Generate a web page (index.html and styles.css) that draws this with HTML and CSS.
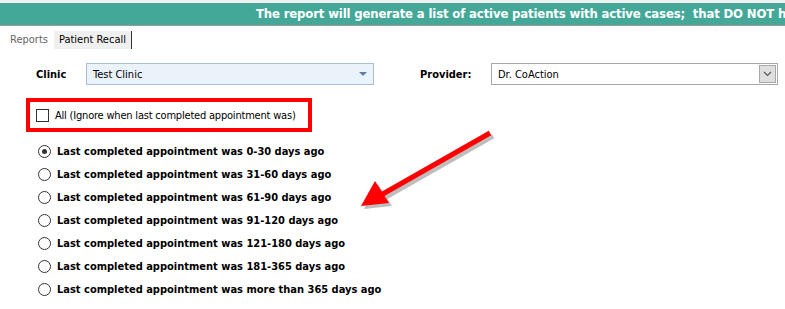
FILE: index.html
```html
<!DOCTYPE html>
<html lang="en">

<head>
    <meta charset="utf-8">
    <title>Patient Recall</title>
    <link rel="stylesheet" href="styles.css">
</head>

<body>
    <div class="banner">
        The report will generate a list of active patients with active cases;&nbsp; that DO NOT have a future appointment scheduled
    </div>
    <div class="tabs">
        <span class="tab">Reports</span>
        <span class="tab active">Patient Recall</span>
    </div>
    <div class="panel">
        <div class="filters">
            <label class="field-label clinic-label">Clinic</label>
            <div class="select clinic-select">
                <span>Test Clinic</span>
                <span class="tri"></span>
            </div>
            <label class="field-label provider-label">Provider:</label>
            <div class="select provider-select">
                <span>Dr. CoAction</span>
                <span class="drop-btn">
                    <svg width="9" height="6" viewBox="0 0 9 6"><path d="M1 1 L4.5 4.5 L8 1" fill="none" stroke="#555" stroke-width="1.2"/></svg>
                </span>
            </div>
        </div>
        <div class="all-box">
            <span class="check"></span>
            <span class="all-text">All (Ignore when last completed appointment was)</span>
        </div>
        <ul class="radios">
            <li><span class="radio on"></span>Last completed appointment was 0-30 days ago</li>
            <li><span class="radio"></span>Last completed appointment was 31-60 days ago</li>
            <li><span class="radio"></span>Last completed appointment was 61-90 days ago</li>
            <li><span class="radio"></span>Last completed appointment was 91-120 days ago</li>
            <li><span class="radio"></span>Last completed appointment was 121-180 days ago</li>
            <li><span class="radio"></span>Last completed appointment was 181-365 days ago</li>
            <li><span class="radio"></span>Last completed appointment was more than 365 days ago</li>
        </ul>
    </div>
    <!-- annotation arrow -->
    <svg class="arrow" width="140" height="85" viewBox="0 0 140 85">
        <g transform="translate(3,3)" opacity="0.25">
            <path d="M129 3 L20 65" stroke="#000" stroke-width="5" fill="none"/>
            <path d="M0 76 L14 51 L28 73 Z" fill="#000"/>
        </g>
        <path d="M129 3 L20 65" stroke="#ff0000" stroke-width="5" fill="none"/>
        <path d="M0 76 L14 51 L28 73 Z" fill="#ff0000"/>
    </svg>
</body>

</html>
```

FILE: styles.css
```css
body {
    margin: 0;
    padding-top: 3px;
    background-color: #f0f0f0;
    font-family: "DejaVu Sans Condensed", "DejaVu Sans", sans-serif;
    font-size: 11px;
    color: #000;
    position: relative;
    height: 306px;
    overflow: hidden;
}

.banner {
    height: 22px;
    line-height: 22px;
    background-color: #44a898;
    border-bottom: 1px solid #9a9a9a;
    color: #fff;
    font-weight: bold;
    font-size: 13px;
    letter-spacing: -0.15px;
    padding-left: 256px;
    white-space: nowrap;
    overflow: hidden;
}

.tabs {
    background-color: #fff;
    padding: 5px 0 0 4px;
    display: flex;
    height: 18px;
}

.tab {
    padding: 0 6px;
    line-height: 18px;
    height: 18px;
    color: #666;
}

.tab.active {
    background-color: #f0f0f0;
    color: #000;
    border-right: 1px solid #333;
    padding: 0 5px;
}

.panel {
    background-color: #fff;
    height: 246px;
    padding-top: 14px;
}

.filters {
    display: flex;
    align-items: center;
    height: 22px;
}

.field-label {
    font-weight: bold;
}

.clinic-label {
    margin-left: 36px;
    width: 50px;
}

.provider-label {
    margin-left: 46px;
    width: 71px;
}

.select {
    box-sizing: border-box;
    height: 22px;
    display: flex;
    align-items: center;
    justify-content: space-between;
    padding-left: 6px;
}

.clinic-select {
    width: 288px;
    background-color: #eaf2fa;
    border: 1px solid #a9bfd6;
    padding-right: 6px;
}

.tri {
    width: 0;
    height: 0;
    border-left: 4px solid transparent;
    border-right: 4px solid transparent;
    border-top: 4px solid #5f7fa8;
}

.provider-select {
    width: 287px;
    background-color: #fff;
    border: 1px solid #a8a8a8;
    padding-right: 1px;
}

.drop-btn {
    box-sizing: border-box;
    width: 17px;
    height: 18px;
    background-color: #dedede;
    border: 1px solid #a8a8a8;
    display: flex;
    align-items: center;
    justify-content: center;
}

.all-box {
    box-sizing: border-box;
    margin: 13px 0 0 26px;
    width: 286px;
    height: 34px;
    border: 4px solid #ff0000;
    display: flex;
    align-items: center;
    padding-left: 6px;
}

.all-text {
    letter-spacing: -0.2px;
}

.check {
    box-sizing: border-box;
    width: 13px;
    height: 13px;
    border: 1px solid #333;
    background-color: #fff;
    margin-right: 6px;
}

.radios {
    list-style: none;
    margin: 8px 0 0 0;
    padding: 0;
}

.radios li {
    height: 23px;
    display: flex;
    align-items: center;
    padding-left: 38px;
    font-weight: bold;
}

.radio {
    box-sizing: border-box;
    width: 13px;
    height: 13px;
    border: 1px solid #333;
    border-radius: 50%;
    margin-right: 6px;
    position: relative;
    background-color: #fff;
}

.radio.on::after {
    content: "";
    position: absolute;
    left: 3px;
    top: 3px;
    width: 5px;
    height: 5px;
    border-radius: 50%;
    background-color: #333;
}

.arrow {
    position: absolute;
    left: 361px;
    top: 130px;
}
```
